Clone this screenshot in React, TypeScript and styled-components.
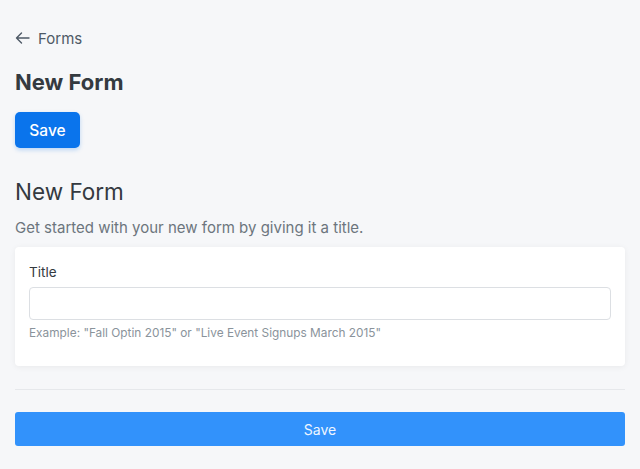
import React from "react";
import styled, { createGlobalStyle } from "styled-components";

const Global = createGlobalStyle`
  html, body { margin: 0; padding: 0; background: #f6f7f9; }
  body { font-family: Inter, "Noto Sans", sans-serif; color: #343a40; }
  * { box-sizing: border-box; }
`;

const Page = styled.div`
  padding: 28px 15px 20px;
  display: flex;
  flex-direction: column;
`;

const BackLink = styled.a`
  display: flex;
  align-items: center;
  gap: 8px;
  height: 20px;
  font-size: 15px;
  color: #4e5a66;
  text-decoration: none;
`;

const PageTitle = styled.h1`
  margin: 21px 0 0;
  font-size: 22px;
  line-height: 26px;
  font-weight: 700;
  color: #343a40;
`;

const PrimaryButton = styled.button`
  margin-top: 17px;
  align-self: flex-start;
  height: 36px;
  width: 65px;
  padding: 0;
  border: none;
  border-radius: 5px;
  background: #0a74ec;
  color: #fff;
  font-family: inherit;
  font-size: 15.5px;
  font-weight: 500;
  box-shadow: 0 2px 4px rgba(10, 116, 236, 0.25);
`;

const SectionTitle = styled.h2`
  margin: 30px 0 0;
  font-size: 22.5px;
  line-height: 28px;
  font-weight: 400;
  color: #343a40;
`;

const Subtitle = styled.p`
  margin: 12px 0 0;
  font-size: 15px;
  line-height: 20px;
  color: #6c757d;
`;

const Card = styled.div`
  margin-top: 9px;
  background: #fff;
  border-radius: 4px;
  box-shadow: 0 1px 6px rgba(0, 0, 0, 0.06);
  padding: 17px 14px 25px;
  display: flex;
  flex-direction: column;
`;

const Label = styled.label`
  font-size: 13.5px;
  line-height: 16px;
  color: #343a40;
`;

const Input = styled.input`
  margin-top: 7px;
  height: 33px;
  border: 1px solid #dcdfe3;
  border-radius: 4px;
  background: #fff;
  font-family: inherit;
  font-size: 14px;
`;

const Help = styled.small`
  margin-top: 6px;
  font-size: 11.85px;
  line-height: 15px;
  color: #8a939b;
`;

const Divider = styled.hr`
  margin: 23px 0 0;
  border: none;
  border-top: 1px solid #e6e8eb;
`;

const WideButton = styled.button`
  margin-top: 22px;
  height: 34px;
  border: none;
  border-radius: 3px;
  background: #3292fb;
  color: #eef6ff;
  font-family: inherit;
  font-size: 14px;
  font-weight: 400;
`;

export default function App() {
  return (
    <>
      <Global />
      <Page>
        <BackLink href="#">
          <svg width="15" height="12" viewBox="0 0 15 12" fill="none" stroke="#4e5a66" strokeWidth="1.4" strokeLinecap="round" strokeLinejoin="round">
            <path d="M14 6H1.5M6.5 1L1.5 6l5 5" />
          </svg>
          Forms
        </BackLink>
        <PageTitle>New Form</PageTitle>
        <PrimaryButton>Save</PrimaryButton>
        <SectionTitle>New Form</SectionTitle>
        <Subtitle>Get started with your new form by giving it a title.</Subtitle>
        <Card>
          <Label>Title</Label>
          <Input />
          <Help>Example: "Fall Optin 2015" or "Live Event Signups March 2015"</Help>
        </Card>
        <Divider />
        <WideButton>Save</WideButton>
      </Page>
    </>
  );
}
